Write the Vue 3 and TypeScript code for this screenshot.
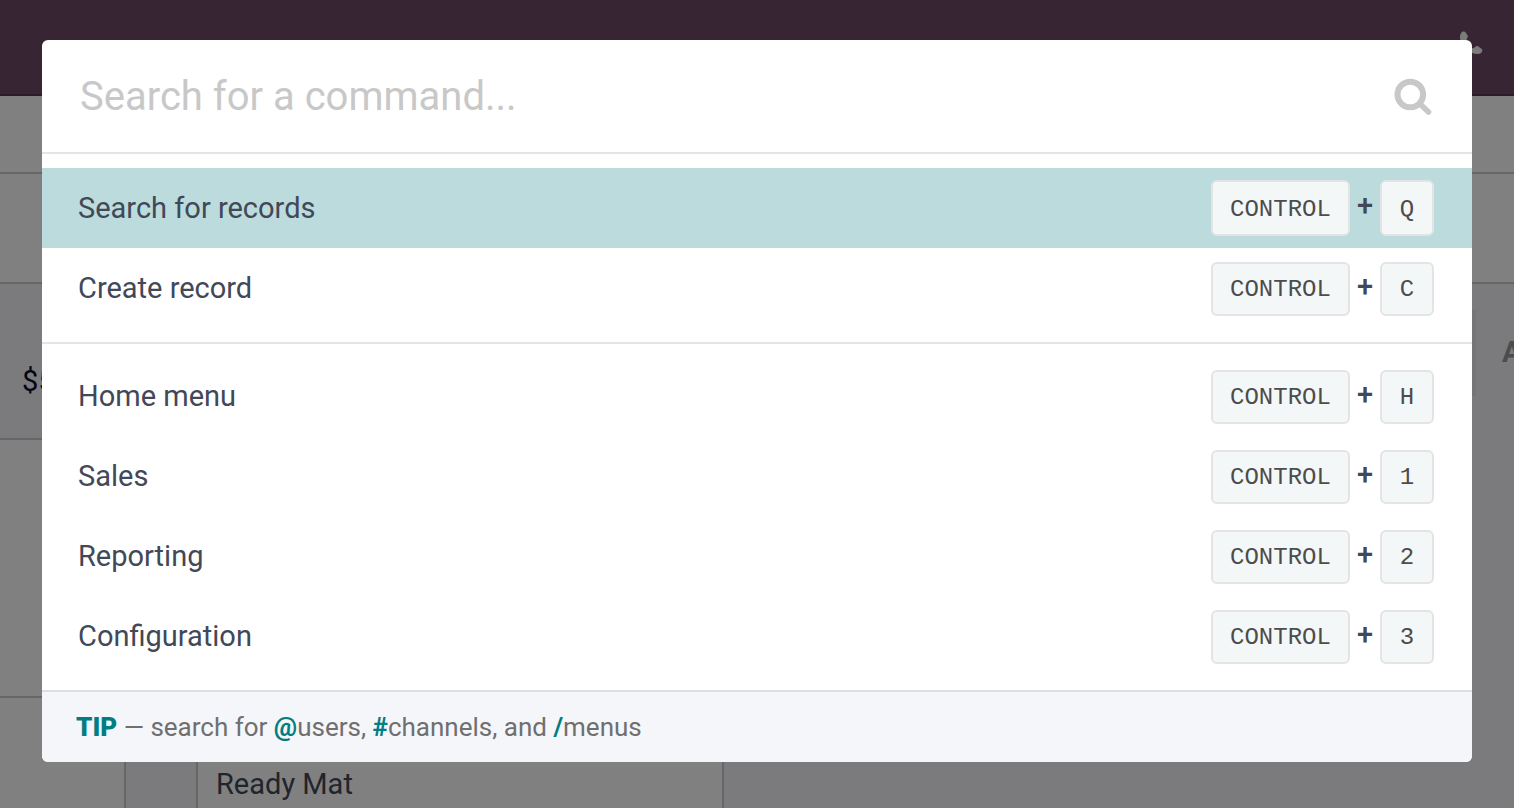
<script setup lang="ts">
import { ref, computed } from 'vue'

interface Command {
  name: string
  key: string
}

const query = ref('')
const active = ref('Search for records')

const groups: Command[][] = [
  [
    { name: 'Search for records', key: 'Q' },
    { name: 'Create record', key: 'C' },
  ],
  [
    { name: 'Home menu', key: 'H' },
    { name: 'Sales', key: '1' },
    { name: 'Reporting', key: '2' },
    { name: 'Configuration', key: '3' },
  ],
]

const visibleGroups = computed(() =>
  groups
    .map((group) => group.filter((c) => c.name.toLowerCase().includes(query.value.toLowerCase())))
    .filter((group) => group.length > 0),
)
</script>

<template>
  <div class="screen">
    <div class="page" aria-hidden="true">
      <header class="navbar">
        <svg class="tools" viewBox="0 0 26 26" width="26" height="26">
          <path d="M3 6C3 3 4.5 .5 6.5 .5C9 .5 9.500 3 11 5L9 10L14 17C17 18.500 18 15 20 15C22 15 22.500 17 25 18C26 21 24 23 20 23C17 23 15 22 12 20L4 10C3.300 9 3 8 3 6z" />
        </svg>
      </header>
      <div class="breadcrumbs"></div>
      <div class="controls"></div>
      <div class="body">
        <div class="summary">
          <span class="amount">$5</span>
          <span class="tab">A</span>
        </div>
        <div class="board">
          <div class="side">
            <div class="side-top"></div>
          </div>
          <div class="sheet">Ready Mat</div>
        </div>
      </div>
    </div>

    <div class="palette" role="dialog" aria-label="Command palette">
      <div class="search">
        <input v-model="query" type="text" placeholder="Search for a command..." aria-label="Search for a command" />
        <svg viewBox="0 -1 38 38" width="38" height="38" aria-hidden="true">
          <circle cx="16.300" cy="16.500" r="12.800" fill="none" stroke="#c8c8c8" stroke-width="6" />
          <path d="M25.500 25.500L34.500 34" stroke="#c8c8c8" stroke-width="5.600" stroke-linecap="round" />
        </svg>
      </div>
      <div class="groups">
        <div v-for="(group, i) in visibleGroups" :key="i" class="group">
          <button
            v-for="command in group"
            :key="command.name"
            type="button"
            class="command"
            :class="{ active: command.name === active }"
            @mouseenter="active = command.name"
          >
            <span>{{ command.name }}</span>
            <span class="keys">
              <kbd>CONTROL</kbd><span class="plus">+</span><kbd>{{ command.key }}</kbd>
            </span>
          </button>
        </div>
      </div>
      <footer class="tip">
        <b class="label">TIP</b> — search for <b>@</b>users, <b>#</b>channels, and <b>/</b>menus
      </footer>
    </div>
  </div>
</template>

<style>
body {
  margin: 0;
}
</style>

<style scoped>
.screen {
  position: relative;
  min-height: 100vh;
  overflow: hidden;
  background: #7b7b7d;
  font-family: Roboto, "Liberation Sans", sans-serif;
  font-size: 29px;
  color: #414858;
}

.screen * {
  box-sizing: border-box;
}

.page {
  position: absolute;
  inset: 0;
  display: flex;
  flex-direction: column;
}

.navbar {
  display: flex;
  justify-content: flex-end;
  height: 96px;
  padding: 31px 31px 0 0;
  background: #382533;
  border-bottom: 2px solid #2b1c27;
}

.tools {
  fill: #797c7b;
}

.breadcrumbs {
  height: 78px;
  background: #808080;
  border-bottom: 2px solid #666668;
}

.controls {
  height: 110px;
  background: #808080;
  border-bottom: 2px solid #666668;
}

.body {
  display: flex;
  flex: 1;
  flex-direction: column;
}

.summary {
  display: flex;
  justify-content: space-between;
  height: 154px;
  padding-top: 26px;
}

.amount {
  padding: 54px 0 0 22px;
  color: #02070f;
}

.tab {
  width: 42px;
  height: 86px;
  border-left: 4px solid #757577;
  padding: 25px 0 0 26px;
  color: #4c4c4e;
  font-weight: 700;
}

.board {
  display: flex;
  flex: 1;
  gap: 70px;
}

.side {
  width: 126px;
  background: #808080;
  border: solid #666668;
  border-width: 2px 2px 0 0;
}

.side-top {
  height: 258px;
  border-bottom: 2px solid #666668;
}

.sheet {
  width: 528px;
  padding: 329px 18px 0;
  background: #808080;
  border: solid #666668;
  border-width: 0 2px;
  color: #20242c;
}

.palette {
  position: absolute;
  top: 40px;
  left: 42px;
  right: 42px;
  overflow: hidden;
  background: #fff;
  border-radius: 6px;
}

.search {
  display: flex;
  align-items: center;
  height: 114px;
  padding: 0 40px 0 38px;
  border-bottom: 2px solid #e4e4e4;
}

.search input {
  flex: 1;
  min-width: 0;
  padding: 0;
  border: 0;
  outline: 0;
  background: none;
  font: inherit;
  font-size: 40px;
  color: inherit;
}

.search input::placeholder {
  color: #c8c8c8;
  opacity: 1;
}

.group {
  padding: 14px 0;
}

.group + .group {
  padding-top: 12px;
  border-top: 2px solid #e4e4e4;
}

.command {
  display: flex;
  align-items: center;
  justify-content: space-between;
  width: 100%;
  height: 80px;
  padding: 0 38px 0 36px;
  border: 0;
  background: none;
  color: inherit;
  font: inherit;
  text-align: left;
}

.command.active {
  background: #bbdbdc;
}

.keys {
  display: flex;
  align-items: center;
  gap: 7px;
  padding-top: 2px;
}

.active .keys {
  padding-top: 0;
}

.plus {
  padding-bottom: 6px;
  font-weight: 500;
}

kbd {
  min-width: 54px;
  height: 54px;
  padding: 0 17px;
  border: 2px solid #e4e4e4;
  border-radius: 6px;
  background: #f3f7f8;
  color: #4c4c4c;
  font-family: "Liberation Mono", monospace;
  font-size: 24px;
  line-height: 52px;
  text-align: center;
}

.active kbd {
  height: 56px;
  line-height: 56px;
}

.tip {
  height: 72px;
  padding: 0 34px;
  border-top: 2px solid #dcdee2;
  background: #f5f6fa;
  color: #6f6f6f;
  font-size: 26px;
  line-height: 70px;
}

.tip b {
  color: #017e84;
  font-weight: 700;
}

.tip .label {
  font-weight: 900;
}
</style>
